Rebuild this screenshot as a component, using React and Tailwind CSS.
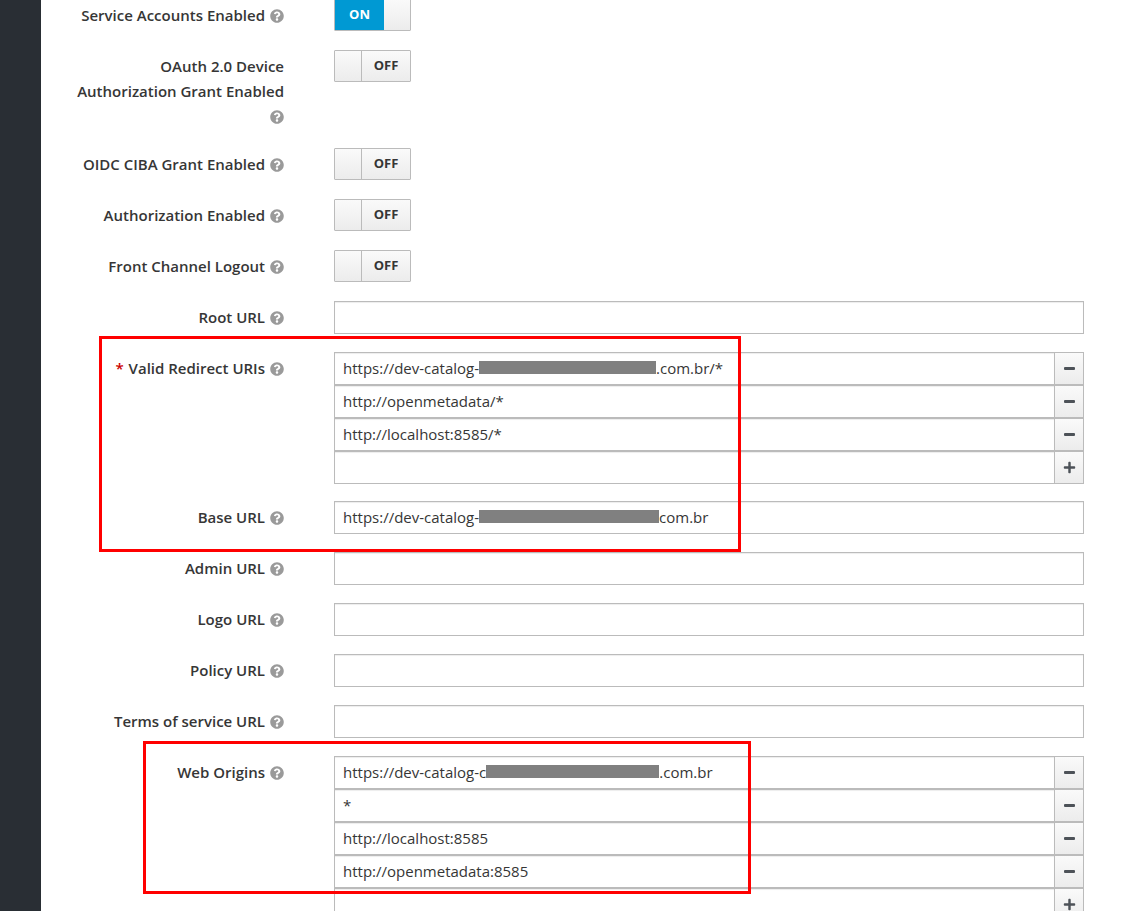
import { FaQuestionCircle, FaPlus } from "react-icons/fa";

const font = { fontFamily: '"Open Sans", "Noto Sans", sans-serif' };

function Help() {
  return (
    <FaQuestionCircle className="inline-block ml-[5px] -mt-[2px] align-middle text-[#9a9a9a]" size={14} />
  );
}

function Label({ children, required }) {
  return (
    <div className="w-[211px] shrink-0 text-right pt-[4px] text-[15px] leading-[25px] font-semibold text-[#363636]">
      {required && <span className="text-[#cc0000] mr-[5px]">*</span>}
      {children}
      <Help />
    </div>
  );
}

function Toggle({ on }) {
  const face = "bg-gradient-to-b from-[#fafafa] to-[#ececec]";
  return (
    <div className="flex h-[32px] w-[77px] border border-[#bbbbbb] rounded-[1px] overflow-hidden text-[13px] font-bold">
      {on ? (
        <>
          <div className="w-[49px] bg-[#0099d3] text-white flex items-center justify-center">ON</div>
          <div className={`flex-1 ${face}`} />
        </>
      ) : (
        <>
          <div className={`w-[27px] border-r border-[#bbbbbb] ${face}`} />
          <div className={`flex-1 ${face} text-[#363636] flex items-center justify-center`}>OFF</div>
        </>
      )}
    </div>
  );
}

function Mask({ w }) {
  return <span className="inline-block h-[13px] bg-[#808080] align-middle -mt-[2px]" style={{ width: w }} />;
}

function UrlText({ v }) {
  if (!v) return null;
  if (typeof v === "string") return <>{v}</>;
  return (
    <>
      {v.pre}
      <Mask w={v.mask} />
      {v.post}
    </>
  );
}

function Input({ value, className = "" }) {
  return (
    <div className={`h-[33px] border border-[#bbbbbb] shadow-[inset_0_1px_1px_rgba(3,3,3,0.075)] pl-[8px] flex items-center text-[15px] text-[#363636] whitespace-nowrap overflow-hidden ${className}`}>
      <UrlText v={value} />
    </div>
  );
}

function SideButton({ plus }) {
  return (
    <div className="w-[29px] shrink-0 h-[33px] border border-l-0 border-[#bbbbbb] bg-gradient-to-b from-[#fafafa] to-[#ececec] flex items-center justify-center">
      {plus ? (
        <FaPlus size={13} className="text-[#4d5258]" />
      ) : (
        <div className="w-[11px] h-[3px] rounded-[1px] bg-[#4d5258]" />
      )}
    </div>
  );
}

function MultiInput({ values }) {
  return (
    <div className="flex flex-col">
      {values.map((v, i) => (
        <div key={i} className="flex">
          <Input value={v} className="flex-1" />
          <SideButton plus={i === values.length - 1 && v === ""} />
        </div>
      ))}
    </div>
  );
}

function Row({ label, required, children, className = "mb-[18px]" }) {
  return (
    <div className={`flex ${className}`}>
      <Label required={required}>{label}</Label>
      <div className="ml-[50px] flex-1">{children}</div>
    </div>
  );
}

export default function App() {
  const redirects = [
    { pre: "https://dev-catalog-", mask: 177, post: ".com.br/*" },
    "http://openmetadata/*",
    "http://localhost:8585/*",
    "",
  ];
  const origins = [
    { pre: "https://dev-catalog-c", mask: 173, post: ".com.br" },
    "*",
    "http://localhost:8585",
    "http://openmetadata:8585",
    "",
  ];

  return (
    <div className="relative flex h-[911px] overflow-hidden bg-white" style={font}>
      <aside className="w-[41px] shrink-0 bg-[#292e34]" />
      <main className="flex-1 pl-[32px] pr-[44px] -mt-[1px]">
        <Row label="Service Accounts Enabled">
          <div className="h-[33px]"><Toggle on /></div>
        </Row>
        <Row label="OAuth 2.0 Device Authorization Grant Enabled" className="mb-[19px]">
          <Toggle />
        </Row>
        <Row label="OIDC CIBA Grant Enabled">
          <div className="h-[33px]"><Toggle /></div>
        </Row>
        <Row label="Authorization Enabled">
          <div className="h-[33px]"><Toggle /></div>
        </Row>
        <Row label="Front Channel Logout">
          <div className="h-[33px]"><Toggle /></div>
        </Row>
        <Row label="Root URL">
          <Input value="" />
        </Row>
        <Row label="Valid Redirect URIs" required className="mb-[17px]">
          <MultiInput values={redirects} />
        </Row>
        <Row label="Base URL">
          <Input value={{ pre: "https://dev-catalog-", mask: 180, post: "com.br" }} />
        </Row>
        <Row label="Admin URL">
          <Input value="" />
        </Row>
        <Row label="Logo URL">
          <Input value="" />
        </Row>
        <Row label="Policy URL">
          <Input value="" />
        </Row>
        <Row label="Terms of service URL">
          <Input value="" />
        </Row>
        <Row label="Web Origins">
          <MultiInput values={origins} />
        </Row>
      </main>

      <div className="absolute left-[99px] top-[336px] w-[642px] h-[216px] border-[3px] border-[#ff0000] pointer-events-none" />
      <div className="absolute left-[143px] top-[741px] w-[608px] h-[153px] border-[3px] border-[#ff0000] pointer-events-none" />
    </div>
  );
}
